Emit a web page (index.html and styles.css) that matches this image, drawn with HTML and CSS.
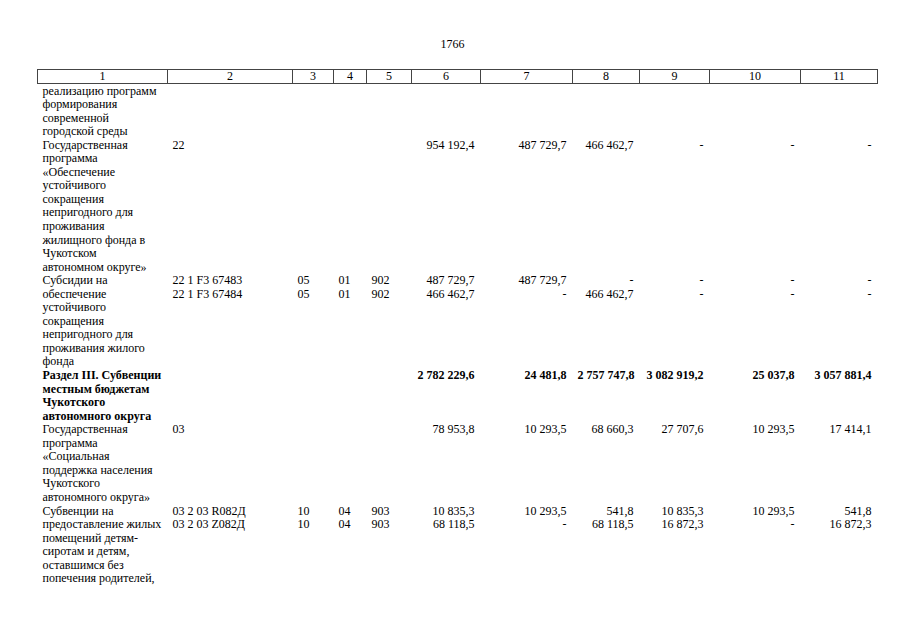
FILE: index.html
```html
<!DOCTYPE html>
<html lang="ru">
<head>
<meta charset="utf-8">
<title>1766</title>
<link rel="stylesheet" href="styles.css">
</head>
<body>
<div class="page">
  <div class="page-num">1766</div>
  <table class="budget">
    <colgroup>
      <col class="c1"><col class="c2"><col class="c3"><col class="c4"><col class="c5"><col class="c6"><col class="c7"><col class="c8"><col class="c9"><col class="c10"><col class="c11">
    </colgroup>
    <thead>
      <tr><th>1</th><th>2</th><th>3</th><th>4</th><th>5</th><th>6</th><th>7</th><th>8</th><th>9</th><th>10</th><th>11</th></tr>
    </thead>
    <tbody>
      <tr>
        <td class="name">реализацию программ формирования современной городской среды</td>
        <td></td><td></td><td></td><td></td><td></td><td></td><td></td><td></td><td></td><td></td>
      </tr>
      <tr>
        <td class="name">Государственная программа «Обеспечение устойчивого сокращения непригодного для проживания жилищного фонда в Чукотском автономном&nbsp;округе»</td>
        <td class="code">22</td><td class="code"></td><td class="code"></td><td class="code"></td>
        <td class="num">954 192,4</td><td class="num">487 729,7</td><td class="num">466 462,7</td><td class="num">-</td><td class="num">-</td><td class="num">-</td>
      </tr>
      <tr>
        <td class="name">Субсидии на обеспечение устойчивого сокращения непригодного для проживания жилого фонда</td>
        <td class="code">22 1 F3 67483<br>22 1 F3 67484</td>
        <td class="code">05<br>05</td><td class="code">01<br>01</td><td class="code">902<br>902</td>
        <td class="num">487 729,7<br>466 462,7</td><td class="num">487 729,7<br>-</td><td class="num">-<br>466 462,7</td><td class="num">-<br>-</td><td class="num">-<br>-</td><td class="num">-<br>-</td>
      </tr>
      <tr class="bold">
        <td class="name">Раздел III. Субвенции местным бюджетам Чукотского автономного округа</td>
        <td class="code"></td><td class="code"></td><td class="code"></td><td class="code"></td>
        <td class="num">2 782 229,6</td><td class="num">24 481,8</td><td class="num">2 757 747,8</td><td class="num">3 082 919,2</td><td class="num">25 037,8</td><td class="num">3 057 881,4</td>
      </tr>
      <tr>
        <td class="name">Государственная программа «Социальная поддержка населения Чукотского автономного округа»</td>
        <td class="code">03</td><td class="code"></td><td class="code"></td><td class="code"></td>
        <td class="num">78 953,8</td><td class="num">10 293,5</td><td class="num">68 660,3</td><td class="num">27 707,6</td><td class="num">10 293,5</td><td class="num">17 414,1</td>
      </tr>
      <tr>
        <td class="name">Субвенции на предоставление жилых помещений детям-сиротам и детям, оставшимся без попечения родителей,</td>
        <td class="code">03 2 03 R082Д<br>03 2 03 Z082Д</td>
        <td class="code">10<br>10</td><td class="code">04<br>04</td><td class="code">903<br>903</td>
        <td class="num">10 835,3<br>68 118,5</td><td class="num">10 293,5<br>-</td><td class="num">541,8<br>68 118,5</td><td class="num">10 835,3<br>16 872,3</td><td class="num">10 293,5<br>-</td><td class="num">541,8<br>16 872,3</td>
      </tr>
    </tbody>
  </table>
</div>
</body>
</html>
```

FILE: styles.css
```css
html, body {
  margin: 0;
  padding: 0;
  background: #ffffff;
}
body {
  font-family: "Liberation Serif", "Times New Roman", serif;
  font-size: 12px;
  line-height: 13.55px;
  color: #000;
}
.page {
  padding: 38px 0 0 37px;
  width: 840px;
}
.page-num {
  text-align: center;
  padding-left: 0;
  margin-bottom: 17px;
  width: 831px;
}
.budget {
  border-collapse: collapse;
  table-layout: fixed;
  width: 840px;
}
.c1 { width: 130px; }
.c2 { width: 125px; }
.c3 { width: 41px; }
.c4 { width: 33px; }
.c5 { width: 45px; }
.c6 { width: 69px; }
.c7 { width: 92px; }
.c8 { width: 67px; }
.c9 { width: 70px; }
.c10 { width: 91px; }
.c11 { width: 77px; }
.budget th {
  font-weight: normal;
  text-align: center;
  border: 1px solid #444;
  padding: 0;
  height: 13px;
  line-height: 13px;
}
.budget td {
  vertical-align: top;
  padding: 0 6px 0 5px;
  white-space: normal;
}
.budget td.num {
  text-align: right;
  white-space: nowrap;
}
.budget td.code {
  text-align: left;
  white-space: nowrap;
}
.budget tbody tr:first-child td {
  padding-top: 1px;
}
.bold td {
  font-weight: bold;
}
```
